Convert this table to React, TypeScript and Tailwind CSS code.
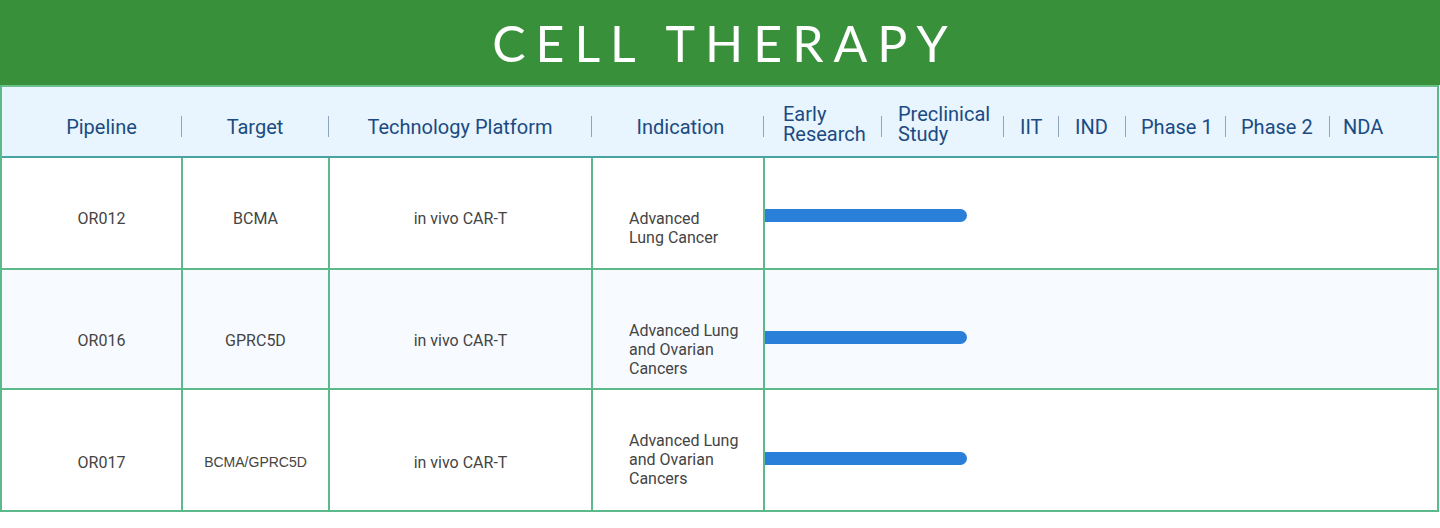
import React from 'react';

const stages = [
  { label: ['Early', 'Research'], w: 'w-[117px]', pl: 'pl-[19px]' },
  { label: ['Preclinical', 'Study'], w: 'w-[121px]', pl: 'pl-[16px]' },
  { label: ['IIT'], w: 'w-[54px]', pl: 'pl-[16px]' },
  { label: ['IND'], w: 'w-[66px]', pl: 'pl-[16px]' },
  { label: ['Phase 1'], w: 'w-[99px]', pl: 'pl-[15px]' },
  { label: ['Phase 2'], w: 'w-[103px]', pl: 'pl-[15px]' },
  { label: ['NDA'], w: 'flex-1', pl: 'pl-[13px]' },
];

const rows = [
  {
    id: 'OR012',
    target: 'BCMA',
    platform: 'in vivo CAR-T',
    indication: ['Advanced', 'Lung Cancer'],
    h: 'h-[110px]',
    pt: 'pt-[10px]',
    indPt: 'pt-[30px]',
    barPt: 'pt-[4px]',
    bg: 'bg-white',
    arial: false,
  },
  {
    id: 'OR016',
    target: 'GPRC5D',
    platform: 'in vivo CAR-T',
    indication: ['Advanced Lung', 'and Ovarian', 'Cancers'],
    h: 'h-[120px]',
    pt: 'pt-[22px]',
    indPt: 'pt-[40px]',
    barPt: 'pt-[16px]',
    bg: 'bg-[#f7fbff]',
    arial: false,
  },
  {
    id: 'OR017',
    target: 'BCMA/GPRC5D',
    platform: 'in vivo CAR-T',
    indication: ['Advanced Lung', 'and Ovarian', 'Cancers'],
    h: 'h-[122px]',
    pt: 'pt-[24px]',
    indPt: 'pt-[18px]',
    barPt: 'pt-[16px]',
    bg: 'bg-white',
    arial: true,
  },
];

function Sep() {
  return <div className="h-[21px] w-px shrink-0 bg-[#8ea4bd]" />;
}

export default function App() {
  return (
    <div className="w-[1440px] h-[528px] bg-white font-['Roboto',sans-serif]">
      <div className="h-[85px] bg-[#38903b] flex items-center justify-center">
        <h1 className="text-white text-[50px] font-['Lato',sans-serif] font-normal tracking-[0.2em] pl-[0.2em] leading-none">
          CELL THERAPY
        </h1>
      </div>

      <div className="w-[1439px] border-l-2 border-r-2 border-b-2 border-[#5cb98a]">
        {/* header */}
        <div className="h-[73px] bg-[#e8f4fe] border-t-2 border-t-[#6cc08c] border-b-2 border-b-[#4aa3a3] flex items-center pt-[10px] text-[20px] leading-[20px] text-[#1b4b82]">
          <div className="w-[179px] flex justify-center pl-[20px]">Pipeline</div>
          <Sep />
          <div className="w-[146px] flex justify-center">Target</div>
          <Sep />
          <div className="w-[262px] flex justify-center">Technology Platform</div>
          <Sep />
          <div className="w-[171px] flex justify-center pl-[6px]">Indication</div>
          <Sep />
          {stages.map((s, i) => (
            <React.Fragment key={i}>
              <div
                className={`${s.w} ${s.pl} shrink-0 flex flex-col justify-center ${s.label.length > 1 ? 'mb-[6px]' : ''}`}
              >
                {s.label.map((l) => (
                  <span key={l} className="whitespace-nowrap">{l}</span>
                ))}
              </div>
              {i < stages.length - 1 && <Sep />}
            </React.Fragment>
          ))}
        </div>

        {/* body */}
        {rows.map((r, i) => (
          <div
            key={r.id}
            className={`${r.h} ${r.bg} flex text-[16px] leading-[19px] text-[#444] ${i > 0 ? 'border-t-2 border-[#5cb98a]' : ''}`}
          >
            <div className={`w-[179px] flex items-center justify-center pl-[20px] ${r.pt}`}>{r.id}</div>
            <div className={`w-[147px] border-l-2 border-[#5cb98a] flex items-center justify-center ${r.pt} ${r.arial ? "font-['Liberation_Sans',sans-serif] text-[14px]" : ''}`}>
              {r.target}
            </div>
            <div className={`w-[263px] border-l-2 border-[#5cb98a] flex items-center justify-center ${r.pt}`}>{r.platform}</div>
            <div className={`w-[172px] border-l-2 border-[#5cb98a] flex items-center pl-[36px] ${r.indPt}`}>
              <div className="flex flex-col">
                {r.indication.map((l) => (
                  <span key={l} className="whitespace-nowrap">{l}</span>
                ))}
              </div>
            </div>
            <div className={`flex-1 border-l-2 border-[#5cb98a] flex items-center ${r.barPt}`}>
              <div className="w-[202px] h-[13px] bg-[#2a7fd8] rounded-r-full" />
            </div>
          </div>
        ))}
      </div>
    </div>
  );
}
